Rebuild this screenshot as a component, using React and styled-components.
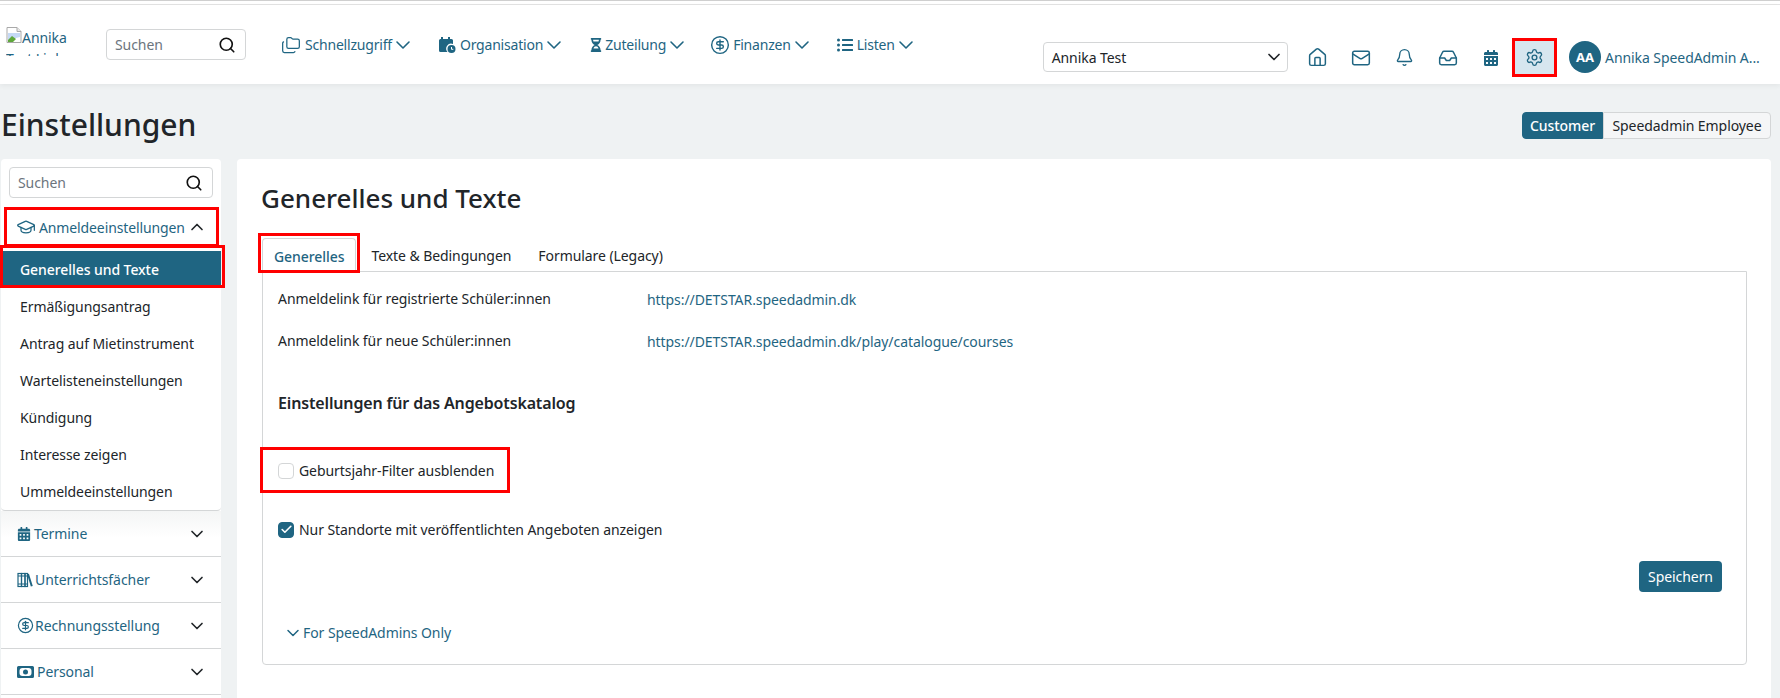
import React from 'react';
import styled, { createGlobalStyle, css } from 'styled-components';
import {
    Bell,
    Check,
    ChevronDown,
    ChevronUp,
    CircleDollarSign,
    Folders,
    GraduationCap,
    House,
    Inbox,
    Mail,
    Search,
    Settings,
} from 'lucide-react';
import { FaCalendarAlt, FaHourglassHalf, FaListUl } from 'react-icons/fa';

const TEAL = '#1f6582';
const INK = '#212529';
const LINE = '#d4d6d7';
const RED = '#f00';

const GlobalStyle = createGlobalStyle`
    html, body {
        margin: 0;
        padding: 0;
        background: #eff2f3;
    }
    body {
        font-family: 'Noto Sans', 'Open Sans', sans-serif;
        font-size: 14px;
        line-height: 21px;
        letter-spacing: -0.07px;
        color: ${INK};
    }
`;

const redFrame = (top, right, bottom, left) => css`
    position: relative;
    &::after {
        content: '';
        position: absolute;
        top: ${top}px;
        right: ${right}px;
        bottom: ${bottom}px;
        left: ${left}px;
        border: 3px solid ${RED};
        pointer-events: none;
    }
`;

const Page = styled.div`
    width: 1780px;
    height: 698px;
    overflow: hidden;
`;

const TopStrip = styled.div`
    height: 3px;
    background: #fff;
    border-top: 1px solid #cfcfcf;
    border-bottom: 1px solid #e3e3e3;
`;

const Navbar = styled.header`
    height: 79px;
    background: #fff;
    display: flex;
    box-shadow: 0 2px 5px rgba(0, 0, 0, 0.05);
    position: relative;
`;

const LeftGroup = styled.div`
    height: 31px;
    margin-top: 24px;
    display: flex;
    align-items: center;
`;

const Logo = styled.div`
    width: 72px;
    height: 29px;
    margin: -7px 28px 0 6px;
    overflow: hidden;
    color: ${TEAL};
    flex: none;
    svg {
        float: left;
    }
`;

const SearchBox = styled.div`
    box-sizing: border-box;
    width: ${(p) => p.$width}px;
    height: 31px;
    padding: 0 9px 0 8px;
    border: 1px solid ${LINE};
    border-radius: 4px;
    background: #fff;
    display: flex;
    align-items: center;
    justify-content: space-between;
    color: #6c757d;
    flex: none;
    svg {
        color: #111;
    }
`;

const Menu = styled.nav`
    margin-left: 37px;
    display: flex;
    gap: 29px;
`;

const MenuItem = styled.div`
    display: flex;
    align-items: center;
    color: ${TEAL};
    white-space: nowrap;
    letter-spacing: -0.2px;
`;

const MenuIcon = styled.span`
    width: ${(p) => p.$width}px;
    margin-left: ${(p) => p.$bleed || 0}px;
    display: flex;
    flex: none;
`;

const MenuChevron = styled(ChevronDown)`
    margin: 0 -6px 0 -1px;
`;

const RightGroup = styled.div`
    margin-left: auto;
    margin-right: 16px;
    margin-top: 34px;
    height: 37px;
    display: flex;
    align-items: center;
`;

const FakeSelect = styled.div`
    box-sizing: border-box;
    width: 245px;
    height: 30px;
    margin-top: -1px;
    margin-right: 8px;
    padding: 0 3px 0 8px;
    border: 1px solid ${LINE};
    border-radius: 4px;
    display: flex;
    align-items: center;
    justify-content: space-between;
`;

const IconButton = styled.div`
    width: 43.4px;
    height: 37px;
    display: flex;
    align-items: center;
    justify-content: center;
    color: ${TEAL};
    ${(p) =>
        p.$active &&
        css`
            background: #d7e6ef;
            outline: 3px solid ${RED};
            outline-offset: -2px;
        `}
`;

const UserBlock = styled.div`
    margin-left: 13px;
    margin-top: -1px;
    width: 195px;
    display: flex;
    align-items: center;
    color: ${TEAL};
`;

const Avatar = styled.div`
    width: 32px;
    height: 32px;
    margin-right: 4px;
    border-radius: 50%;
    background: ${TEAL};
    color: #fff;
    font-weight: 700;
    font-size: 13px;
    display: flex;
    align-items: center;
    justify-content: center;
    flex: none;
`;

const TitleRow = styled.div`
    height: 75px;
    padding: 0 9px 0 1px;
    display: flex;
    justify-content: space-between;
`;

const PageTitle = styled.h1`
    margin: 21px 0 0;
    font-size: 30px;
    line-height: 40px;
    font-weight: 500;
    letter-spacing: 0;
`;

const Toggle = styled.div`
    margin-top: 28px;
    height: 27px;
    display: flex;
`;

const ToggleOption = styled.div`
    box-sizing: border-box;
    width: ${(p) => (p.$active ? 81 : 168)}px;
    text-align: center;
    line-height: 25px;
    border: 1px solid ${(p) => (p.$active ? TEAL : LINE)};
    border-radius: ${(p) => (p.$active ? '4px 0 0 4px' : '0 4px 4px 0')};
    background: ${(p) => (p.$active ? TEAL : '#f5f6f7')};
    color: ${(p) => (p.$active ? '#fff' : INK)};
    font-weight: ${(p) => (p.$active ? 500 : 400)};
`;

const Body = styled.div`
    padding: 0 9px 0 1px;
    display: flex;
    gap: 16px;
    align-items: flex-start;
`;

const Sidebar = styled.aside`
    width: 220px;
    height: 539px;
    flex: none;
    background: #fff;
    border-radius: 4px 4px 0 0;
    padding-top: 8px;
    box-sizing: border-box;
`;

const SidebarSearch = styled.div`
    margin-left: 8px;
`;

const OpenHeader = styled.div`
    height: 40px;
    margin: 9px 2px 4px 3px;
    padding-left: 12px;
    box-sizing: border-box;
    display: flex;
    align-items: center;
    color: ${TEAL};
    letter-spacing: -0.12px;
    ${redFrame(0, 0, 0, 0)}
`;

const HeaderIcon = styled.span`
    width: ${(p) => p.$width}px;
    display: flex;
    flex: none;
    color: ${TEAL};
`;

const Chevron = styled.span`
    position: absolute;
    right: ${(p) => p.$right}px;
    display: flex;
    color: ${INK};
`;

const SubList = styled.div`
    border-bottom: 1px solid ${LINE};
    border-radius: 0 0 4px 4px;
`;

const SubItem = styled.div`
    height: 37px;
    margin-left: 2px;
    padding-left: 17px;
    display: flex;
    align-items: center;
    ${(p) =>
        p.$active &&
        css`
            background: ${TEAL};
            color: #fff;
            font-weight: 500;
            ${redFrame(-6, -4, 0, -3)}
        `}
`;

const Section = styled.div`
    height: 45px;
    padding-left: 16px;
    border-bottom: 1px solid ${LINE};
    display: flex;
    align-items: center;
    position: relative;
    color: ${TEAL};
    ${(p) =>
        p.$first &&
        css`
            background: linear-gradient(#f4f5f5, #fff 60%);
        `}
`;

const Content = styled.main`
    flex: 1;
    height: 539px;
    box-sizing: border-box;
    background: #fff;
    border-radius: 4px 4px 0 0;
    padding: 20px 24px 0 25px;
`;

const Heading = styled.h2`
    margin: 0 0 0 -1px;
    font-size: 26px;
    line-height: 38px;
    font-weight: 500;
    letter-spacing: 0;
`;

const Tabs = styled.div`
    margin-top: 21px;
    height: 33px;
    display: flex;
    gap: 3px;
`;

const Tab = styled.div`
    box-sizing: border-box;
    height: 33px;
    padding: 0 12px;
    line-height: 36px;
    ${(p) =>
        p.$active &&
        css`
            padding: 0 11px;
            height: 34px;
            color: ${TEAL};
            font-weight: 500;
            background: #fff;
            border: 1px solid ${LINE};
            border-bottom: 0;
            border-radius: 4px 4px 0 0;
            z-index: 1;
            ${redFrame(-6, -5, -1, -5)}
        `}
`;

const TabPanel = styled.section`
    box-sizing: border-box;
    height: 394px;
    padding: 16px 24px 0 15px;
    border: 1px solid ${LINE};
    border-radius: 0 0 4px 4px;
`;

const LinkRow = styled.div`
    display: grid;
    grid-template-columns: 369px 1fr;
    margin-bottom: 21px;
`;

const LinkValue = styled.a`
    color: ${TEAL};
    position: relative;
    top: 1px;
`;

const PanelHeading = styled.h3`
    margin: 41px 0 0;
    font-size: 16px;
    line-height: 22px;
    font-weight: 600;
    letter-spacing: -0.15px;
`;

const CheckRow = styled.label`
    width: fit-content;
    margin-top: ${(p) => p.$gap}px;
    display: flex;
    align-items: center;
    gap: 5px;
    ${(p) => p.$marked && redFrame(-13, -16, -12, -18)}
`;

const Box = styled.span`
    box-sizing: border-box;
    width: 16px;
    height: 16px;
    border-radius: 4px;
    border: 1px solid ${(p) => (p.$checked ? TEAL : LINE)};
    background: ${(p) => (p.$checked ? TEAL : '#fff')};
    color: #fff;
    display: flex;
    align-items: center;
    justify-content: center;
`;

const SaveRow = styled.div`
    margin-top: 21px;
    display: flex;
    justify-content: flex-end;
`;

const SaveButton = styled.button`
    width: 83px;
    height: 31px;
    border: 0;
    border-radius: 4px;
    background: ${TEAL};
    color: #fff;
    font: inherit;
    letter-spacing: inherit;
`;

const Expander = styled.div`
    margin: 30px 0 0 5px;
    display: flex;
    align-items: center;
    color: ${TEAL};
`;

const BrokenImage = () => (
    <svg width="16" height="16" viewBox="0 0 16 16">
        <path d="M1 .5h10l4 4v11H1z" fill="#fff" stroke="#a9a9a9" />
        <path d="M11 .5v4h4" fill="#e8e8e8" stroke="#a9a9a9" />
        <path d="M2 6h12v4L2 13z" fill="#c5d9f5" />
        <path d="M2 15v-2l4-4 4 3-3 3z" fill="#5fa83b" />
    </svg>
);

const CalendarClock = () => (
    <svg width="18" height="18" viewBox="0 0 18 18" fill={TEAL}>
        <path d="M3 1h2v2h5V1h2v2h1.500A1.500 1.500 0 0 1 15 4.500V8a5 5 0 0 0-5.500 8H2.500A1.500 1.500 0 0 1 1 14.500v-10A1.500 1.500 0 0 1 2.500 3H3z" />
        <circle cx="13.500" cy="13" r="4" />
        <path d="M13.500 11v2.300h1.800" stroke="#fff" strokeWidth="1" fill="none" />
    </svg>
);

const Books = () => (
    <svg width="16" height="16" viewBox="0 0 16 16" fill="none" stroke={TEAL} strokeWidth="1.200">
        <rect x="1" y="1.500" width="3.500" height="13" />
        <rect x="4.500" y="1.500" width="3.500" height="13" />
        <rect x="8" y="1.500" width="2.500" height="13" />
        <path d="M11 2l3.800 12.300" strokeWidth="2" />
        <path d="M1 4h9.500M1 12h9.500" />
    </svg>
);

const Money = () => (
    <svg width="17" height="12" viewBox="0 0 17 12" fill={TEAL}>
        <path d="M1.500 0h14A1.500 1.500 0 0 1 17 1.500v9a1.500 1.500 0 0 1-1.500 1.500h-14A1.500 1.500 0 0 1 0 10.500v-9A1.500 1.500 0 0 1 1.500 0z" />
        <rect x="2.500" y="2" width="12" height="8" rx="3" fill="#fff" />
        <circle cx="8.500" cy="6" r="2.500" />
    </svg>
);

const navMenu = [
    { label: 'Schnellzugriff', width: 24, bleed: -2, icon: <Folders size={20} strokeWidth={1.5} /> },
    { label: 'Organisation', width: 22, icon: <CalendarClock /> },
    { label: 'Zuteilung', width: 16, icon: <FaHourglassHalf size={14} /> },
    { label: 'Finanzen', width: 23, bleed: -2, icon: <CircleDollarSign size={20} strokeWidth={1.7} /> },
    { label: 'Listen', width: 20, icon: <FaListUl size={16} /> },
];

const subItems = [
    'Generelles und Texte',
    'Ermäßigungsantrag',
    'Antrag auf Mietinstrument',
    'Wartelisteneinstellungen',
    'Kündigung',
    'Interesse zeigen',
    'Ummeldeeinstellungen',
];

const sections = [
    { label: 'Termine', width: 17, icon: <FaCalendarAlt size={14} /> },
    { label: 'Unterrichtsfächer', width: 18, icon: <Books /> },
    { label: 'Rechnungsstellung', width: 18, icon: <CircleDollarSign size={17} strokeWidth={1.7} /> },
    { label: 'Personal', width: 20, icon: <Money /> },
];

const App = () => (
    <Page>
        <GlobalStyle />
        <TopStrip />
        <Navbar>
            <LeftGroup>
                <Logo>
                    <BrokenImage />
                    Annika Test Link
                </Logo>
                <SearchBox $width={140}>
                    Suchen
                    <Search size={18} strokeWidth={2.2} />
                </SearchBox>
                <Menu>
                    {navMenu.map((item) => (
                        <MenuItem key={item.label}>
                            <MenuIcon $width={item.width} $bleed={item.bleed}>{item.icon}</MenuIcon>
                            {item.label}
                            <MenuChevron size={24} strokeWidth={1.6} />
                        </MenuItem>
                    ))}
                </Menu>
            </LeftGroup>
            <RightGroup>
                <FakeSelect>
                    Annika Test
                    <ChevronDown size={20} strokeWidth={2} />
                </FakeSelect>
                <IconButton><House size={21} strokeWidth={1.7} /></IconButton>
                <IconButton><Mail size={20} strokeWidth={1.8} /></IconButton>
                <IconButton><Bell size={19} strokeWidth={1.7} /></IconButton>
                <IconButton><Inbox size={20} strokeWidth={1.8} /></IconButton>
                <IconButton><FaCalendarAlt size={16} /></IconButton>
                <IconButton $active><Settings size={19} strokeWidth={1.7} /></IconButton>
                <UserBlock>
                    <Avatar>AA</Avatar>
                    Annika SpeedAdmin A...
                </UserBlock>
            </RightGroup>
        </Navbar>
        <TitleRow>
            <PageTitle>Einstellungen</PageTitle>
            <Toggle>
                <ToggleOption $active>Customer</ToggleOption>
                <ToggleOption>Speedadmin Employee</ToggleOption>
            </Toggle>
        </TitleRow>
        <Body>
            <Sidebar>
                <SidebarSearch>
                    <SearchBox $width={204}>
                        Suchen
                        <Search size={18} strokeWidth={2.2} />
                    </SearchBox>
                </SidebarSearch>
                <OpenHeader>
                    <HeaderIcon $width={23}><GraduationCap size={20} strokeWidth={1.5} /></HeaderIcon>
                    Anmeldeeinstellungen
                    <Chevron $right={12}><ChevronUp size={20} strokeWidth={2} /></Chevron>
                </OpenHeader>
                <SubList>
                    {subItems.map((label, i) => (
                        <SubItem key={label} $active={i === 0}>{label}</SubItem>
                    ))}
                </SubList>
                {sections.map((section, i) => (
                    <Section key={section.label} $first={i === 0}>
                        <HeaderIcon $width={section.width}>{section.icon}</HeaderIcon>
                        {section.label}
                        <Chevron $right={14}><ChevronDown size={20} strokeWidth={2} /></Chevron>
                    </Section>
                ))}
            </Sidebar>
            <Content>
                <Heading>Generelles und Texte</Heading>
                <Tabs>
                    <Tab $active>Generelles</Tab>
                    <Tab>Texte &amp; Bedingungen</Tab>
                    <Tab>Formulare (Legacy)</Tab>
                </Tabs>
                <TabPanel>
                    <LinkRow>
                        <span>Anmeldelink für registrierte Schüler:innen</span>
                        <LinkValue>https://DETSTAR.speedadmin.dk</LinkValue>
                    </LinkRow>
                    <LinkRow>
                        <span>Anmeldelink für neue Schüler:innen</span>
                        <LinkValue>https://DETSTAR.speedadmin.dk/play/catalogue/courses</LinkValue>
                    </LinkRow>
                    <PanelHeading>Einstellungen für das Angebotskatalog</PanelHeading>
                    <CheckRow $gap={46} $marked>
                        <Box />
                        Geburtsjahr-Filter ausblenden
                    </CheckRow>
                    <CheckRow $gap={38}>
                        <Box $checked><Check size={13} strokeWidth={3} /></Box>
                        Nur Standorte mit veröffentlichten Angeboten anzeigen
                    </CheckRow>
                    <SaveRow><SaveButton>Speichern</SaveButton></SaveRow>
                    <Expander>
                        <ChevronDown size={20} strokeWidth={1.8} />
                        For SpeedAdmins Only
                    </Expander>
                </TabPanel>
            </Content>
        </Body>
    </Page>
);

export default App;
